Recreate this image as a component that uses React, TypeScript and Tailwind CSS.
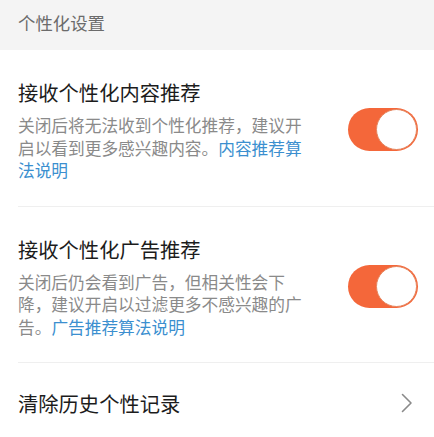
import React from "react";

const font = { fontFamily: '"Noto Sans CJK SC", "Noto Sans", sans-serif' };

function Toggle() {
  return (
    <div className="relative h-[43px] w-[70px] shrink-0 rounded-full bg-[#f4673a]">
      <div className="absolute right-[1px] top-[1px] h-[41px] w-[41px] rounded-full border-[1.5px] border-[#e5865f] bg-white" />
    </div>
  );
}

function Chevron() {
  return (
    <svg width="12" height="20" viewBox="0 0 12 20" className="shrink-0">
      <path d="M1.5 1.5 L10 10 L1.5 18.5" fill="none" stroke="#8a8a8a" strokeWidth="1.6" strokeLinecap="round" strokeLinejoin="round" />
    </svg>
  );
}

function SwitchRow({ title, desc, link }: { title: string; desc: string; link: string }) {
  return (
    <div className="flex items-center justify-between border-b border-[#efefef] pb-[24px] pr-[16px] pt-[28px]">
      <div>
        <div className="text-[20.3px] leading-[28px] text-[#1c1c1c]">{title}</div>
        <p className="mt-[8px] w-[286px] text-[16.7px] leading-[22.5px] text-[#8a8a8a]">
          {desc}
          <span className="text-[#3b8fcf]">{link}</span>
        </p>
      </div>
      <Toggle />
    </div>
  );
}

export default function App() {
  return (
    <div className="h-[437px] w-[434px] overflow-hidden bg-white" style={font}>
      <div className="flex h-[50px] items-center bg-[#f4f4f4] pb-[3px] pl-[18px] text-[17.4px] text-[#6b6b6b]">
        个性化设置
      </div>
      <div className="pl-[18px]">
        <SwitchRow
          title="接收个性化内容推荐"
          desc="关闭后将无法收到个性化推荐，建议开启以看到更多感兴趣内容。"
          link="内容推荐算法说明"
        />
        <SwitchRow
          title="接收个性化广告推荐"
          desc="关闭后仍会看到广告，但相关性会下降，建议开启以过滤更多不感兴趣的广告。"
          link="广告推荐算法说明"
        />
        <div className="flex items-center justify-between pr-[21px] pt-[26px]">
          <div className="text-[20.3px] leading-[28px] text-[#1c1c1c]">清除历史个性记录</div>
          <Chevron />
        </div>
      </div>
    </div>
  );
}
